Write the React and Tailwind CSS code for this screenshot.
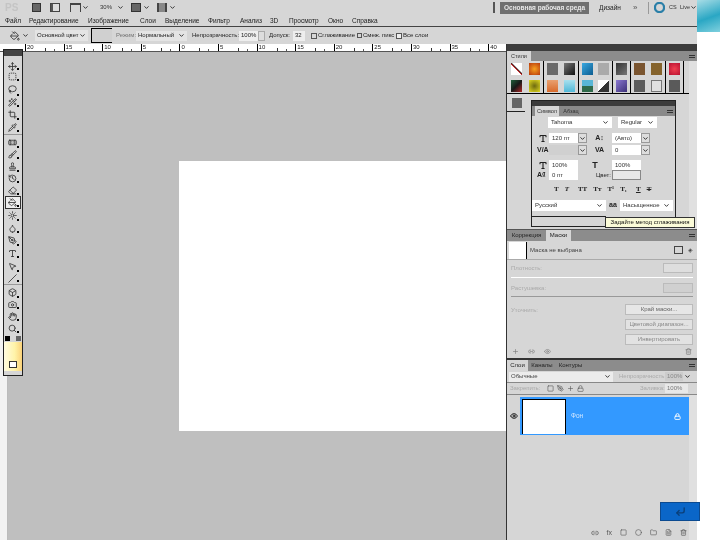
import React from 'react';
import {
  Move, SquareDashed, Lasso, Wand2, Crop, Pipette, Bandage, Brush, Stamp, History, Eraser, PaintBucket,
  Sun, Droplet, PenTool, Type, MousePointer2, Slash, Box, Camera, Hand, Search, ChevronDown, Square,
  Eye, Lock, Link2, Plus, Trash2, Folder, FileText, CornerDownLeft, Circle,
} from 'lucide-react';

const menus = [
  ['Файл', 'w-[24px]'], ['Редактирование', 'w-[59px]'], ['Изображение', 'w-[52px]'], ['Слои', 'w-[25px]'],
  ['Выделение', 'w-[43px]'], ['Фильтр', 'w-[32px]'], ['Анализ', 'w-[30px]'], ['3D', 'w-[19px]'],
  ['Просмотр', 'w-[39px]'], ['Окно', 'w-[24px]'], ['Справка', 'w-[32px]'],
];

const tools = [
  [Move, 'h-[9px]'], [SquareDashed, 'h-[11px]'], [Lasso, 'h-[15px]'], [Wand2, 'h-[11px]'], [Crop, 'h-[13px]'], [Pipette, 'h-[12px]'],
  null,
  [Bandage, 'h-[14px]'], [Brush, 'h-[11px]'], [Stamp, 'h-[13px]'], [History, 'h-[11px]'], [Eraser, 'h-[12px]'],
  [PaintBucket, 'h-[13px]', true], [Sun, 'h-[13px]'], [Droplet, 'h-[12px]'], [PenTool, 'h-[13px]'], [Type, 'h-[12px]'], [MousePointer2, 'h-[14px]'], [Slash, 'h-[10px]'],
  null,
  [Box, 'h-[14px]'], [Camera, 'h-[11px]'], [Hand, 'h-[12px]'], [Search, 'h-[12px]'],
];

const swatchGroups = [
  { w: 'w-[37px]', top: ['bg-[linear-gradient(45deg,#fff_44%,#c81e1e_48%,#222_54%,#fff_58%)]', 'bg-[radial-gradient(circle,#f6a020,#b8380c)]'], bottom: ['bg-[linear-gradient(135deg,#1f5f3a,#181818_50%,#b42828)]', 'bg-[radial-gradient(circle,#6e6a10,#e0d820)]'] },
  { w: 'w-[35px]', top: ['bg-[#6a6a6a]', 'bg-[linear-gradient(135deg,#777,#111)]'], bottom: ['bg-[linear-gradient(#e9a070,#d86a2c)]', 'bg-[linear-gradient(#a8e0ee,#50b8d8)]'] },
  { w: 'w-[34px]', top: ['bg-[linear-gradient(135deg,#3aa8e0,#0c5c90)]', 'bg-[#aaaaaa]'], bottom: ['bg-[linear-gradient(#59b6d6_50%,#2f6a4a_50%)]', 'bg-[linear-gradient(135deg,#fff_50%,#333_50%)]'] },
  { w: 'w-[18px]', top: ['bg-[linear-gradient(135deg,#333,#777)]'], bottom: ['bg-[linear-gradient(135deg,#8a78d0,#3c3078)]'] },
  { w: 'w-[35px]', top: ['bg-[#7a5530]', 'bg-[#85632c]'], bottom: ['bg-[#5c5c5c]', 'bg-[#e0e0e0] border border-[#777]'] },
  { w: 'w-[18px]', top: ['bg-[radial-gradient(circle,#f04050,#b81030)]'], bottom: ['bg-[#5a5a5a]'] },
];

function Arrow({ className = '' }) {
  return <ChevronDown size={7} strokeWidth={3} className={`shrink-0 text-[#222] ${className}`} />;
}

function Box2({ className = '', children }) {
  return <div className={`h-[10px] bg-white flex items-center px-[3px] text-[6px] text-[#333] ${className}`}>{children}</div>;
}

function Ruler() {
  const labels = ['20', '15', '10', '5', '0', '5', '10', '15', '20', '25', '30', '35', '40'];
  return (
    <div className="h-[8px] bg-white flex pl-[25px] overflow-hidden border-b border-[#555]">
      {labels.map((l, i) => (
        <div key={i} className="w-[38.6px] shrink-0 border-l border-black flex h-[8px]">
          <span className="text-[6px] leading-[6px] text-[#222] pl-[1px] w-[19px]">{l}</span>
          <span className="w-[1px] h-[3px] mt-[4px] bg-[#333]" />
          <span className="w-[9px] border-r border-[#555] h-[2px] mt-[5px]" />
        </div>
      ))}
    </div>
  );
}

function PanelMenu() {
  return <span className="ml-auto mr-[2px] self-center w-[6px] h-[3px] border-y border-[#333]" />;
}

function MaskField({ label, dim, className = '' }) {
  return (
    <div className={`h-[10px] flex items-center px-[4px] ${className}`}>
      <span className="text-[6px] text-[#aaa] flex-1">{label}</span>
      <div className={`w-[30px] h-[10px] border border-[#bbb] ${dim ? 'bg-[#d0d0d0]' : 'bg-[#dedede]'}`} />
    </div>
  );
}

function CharRow({ children, className = '' }) {
  return <div className={`flex items-center ${className}`}>{children}</div>;
}

export default function App() {
  return (
    <div className="w-[720px] h-[540px] flex bg-white relative overflow-hidden blur-[0.35px] font-['Liberation_Sans',sans-serif]">
      <div className="w-[697px] flex flex-col bg-[#d6d6d6]">

        {/* Верхняя панель приложения */}
        <div className="h-[15px] flex items-center text-[#333]">
          <span className="w-[32px] pl-[5px] text-[10px] font-bold text-[#c4c4c4]">PS</span>
          <div className="w-[18px]"><div className="w-[9px] h-[9px] bg-[#666] border border-[#333]" /></div>
          <div className="w-[20px]"><div className="w-[10px] h-[9px] border border-[#444] bg-[linear-gradient(90deg,#555_30%,#ddd_30%)]" /></div>
          <div className="w-[30px] flex items-center gap-[1px]"><div className="w-[11px] h-[9px] border-t-2 border-l border-r border-[#444]" /><Arrow /></div>
          <span className="w-[31px] text-[6px] flex items-center gap-[5px]">30%<Arrow /></span>
          <div className="w-[26px] flex items-center gap-[2px]"><div className="w-[10px] h-[9px] bg-[#666] border border-[#333]" /><Arrow /></div>
          <div className="w-[24px] flex items-center gap-[2px]"><div className="w-[10px] h-[9px] border-x-2 border-[#444] bg-[#888]" /><Arrow /></div>
          <div className="flex-1 flex justify-end pr-[5px]"><div className="w-[2px] h-[11px] bg-[#555]" /></div>
          <div className="w-[89px] h-[12px] bg-[#707070] text-[#e8e8e8] text-[6.5px] font-bold flex items-center justify-center">Основная рабочая среда</div>
          <span className="w-[44px] pl-[10px] text-[6.5px] text-[#222]">Дизайн</span>
          <span className="w-[15px] text-[8px] text-[#555]">»</span>
          <div className="w-[1px] h-[12px] bg-[#999] mr-[5px]" />
          <Circle size={11} strokeWidth={5} className="text-[#2a7fa8]" />
          <span className="text-[5.5px] pl-[4px] w-[15px]">CS</span>
          <span className="text-[5.5px] flex items-center w-[17px]">Live<Arrow /></span>
        </div>

        {/* Главное меню */}
        <div className="h-[12px] flex items-center pl-[5px] border-b border-[#444] text-[6.5px] text-[#222]">
          {menus.map(([m, w]) => <span key={m} className={w}>{m}</span>)}
        </div>

        {/* Параметры инструмента */}
        <div className="h-[17px] flex items-center text-[6px] text-[#222]">
          <div className="w-[35px] pl-[10px] flex items-center"><PaintBucket size={10} className="text-[#333]" /><Arrow className="ml-[2px]" /></div>
          <div className="w-[53px] h-[11px] bg-[#e4e4e4] flex items-center justify-between px-[2px]">Основной цвет<Arrow /></div>
          <div className="w-[21px] h-[15px] ml-[3px] border-l border-t border-b border-black bg-[#d0d0d0]" />
          <span className="w-[24px] pl-[4px] text-[#777]">Режим:</span>
          <div className="w-[51px] h-[10px] bg-[#e4e4e4] flex items-center justify-between px-[2px]">Нормальный<Arrow /></div>
          <span className="w-[52px] pl-[5px] whitespace-nowrap">Непрозрачность:</span>
          <div className="w-[19px] h-[10px] bg-[#eee] px-[2px] flex items-center">100%</div>
          <div className="w-[7px] h-[10px] border border-[#aaa] bg-[#ddd]" />
          <span className="w-[28px] pl-[4px]">Допуск:</span>
          <div className="w-[12px] h-[10px] bg-[#eee] px-[2px] flex items-center">32</div>
          <div className="w-[6px] ml-[6px] h-[6px] border border-[#555]" />
          <span className="w-[40px] pl-[1px]">Сглаживание</span>
          <div className="w-[5px] h-[5px] border border-[#555]" />
          <span className="w-[34px] pl-[1px]">Смеж. пикс</span>
          <div className="w-[6px] h-[6px] border border-[#555] bg-[#eee]" />
          <span className="pl-[1px]">Все слои</span>
        </div>

        {/* Рабочая область */}
        <div className="flex-1 flex min-h-0">
          <div className="w-[506px] flex flex-col">
            <Ruler />
            <div className="flex-1 flex min-h-0">
              <div className="w-[8px] bg-[#f2f2f2] border-r border-[#bbb]" />
              <div className="flex-1 bg-[#bfbfbf] pt-[109px] pl-[171px]">
                <div className="w-[327px] h-[270px] bg-white" />
              </div>
            </div>
          </div>

          {/* Док панелей */}
          <div className="w-[191px] flex flex-col border-l border-[#333]">
            <div className="h-[7px] bg-[#3c3c3c]" />

            <div className="h-[10px] bg-[#8c8c8c] flex">
              <span className="w-[24px] bg-[#d6d6d6] text-[5.5px] text-[#333] flex items-center justify-center">Стили</span>
              <PanelMenu />
            </div>
            <div className="flex-none h-[49px] flex">
              <div className="flex-1 flex flex-col">
                <div className="h-[33px] flex border-b border-black">
                  {swatchGroups.map((g, i) => (
                    <div key={i} className={`${g.w} border-r border-black flex flex-col gap-[5px] pt-[2px]`}>
                      <div className="flex justify-around">{g.top.map((c, j) => <div key={j} className={`w-[11px] h-[12px] ${c}`} />)}</div>
                      <div className="flex justify-around">{g.bottom.map((c, j) => <div key={j} className={`w-[11px] h-[12px] ${c}`} />)}</div>
                    </div>
                  ))}
                </div>
                <div className="pl-[5px] pt-[4px]"><div className="w-[10px] h-[10px] bg-[#666]" /></div>
              </div>
              <div className="w-[8px] bg-[#e0e0e0]" />
            </div>

            <div className="flex-none h-[119px] bg-[#d6d6d6] flex">
              <div className="flex-1"><div className="w-[18px] h-[1px] bg-[#222] mt-[1px]" /></div>
              <div className="w-[8px] bg-[#e0e0e0]" />
            </div>

            {/* Маски */}
            <div className="h-[12px] bg-[#8c8c8c] flex text-[6px] text-[#222] border-t border-[#555]">
              <span className="w-[39px] flex items-center justify-center">Коррекция</span>
              <span className="w-[25px] bg-[#d6d6d6] flex items-center justify-center">Маски</span>
              <PanelMenu />
            </div>
            <div className="h-[119px] flex flex-col border-b-2 border-[#333]">
              <div className="h-[19px] flex items-center border-b border-[#aaa] pl-[2px] pr-[4px]">
                <div className="w-[18px] h-[17px] bg-white border-r border-black" />
                <span className="text-[6px] text-[#444] pl-[3px] flex-1">Маска не выбрана</span>
                <div className="w-[9px] h-[8px] border border-[#444] mr-[5px]" />
                <span className="text-[6px] text-[#444]">◈</span>
              </div>
              <MaskField label="Плотность:" className="mt-[3px]" />
              <div className="h-[1px] mx-[4px] bg-white mt-[4px]" />
              <MaskField label="Растушевка:" dim className="mt-[5px]" />
              <div className="h-[1px] mx-[4px] bg-[#999] mt-[3px]" />
              <div className="flex px-[4px] mt-[7px]">
                <span className="text-[6px] text-[#aaa] flex-1 pt-[2px]">Уточнить:</span>
                <div className="w-[68px] flex flex-col gap-[4px] text-[6px] text-[#888]">
                  <div className="h-[11px] bg-[#e6e6e6] border border-[#bbb] flex items-center justify-center text-[#666]">Край маски...</div>
                  <div className="h-[11px] bg-[#e2e2e2] border border-[#bbb] flex items-center justify-center">Цветовой диапазон...</div>
                  <div className="h-[11px] bg-[#e2e2e2] border border-[#bbb] flex items-center justify-center">Инвертировать</div>
                </div>
              </div>
              <div className="mt-auto h-[12px] mb-[1px] flex items-center px-[5px] gap-[9px] text-[#777]">
                <Plus size={7} /><Link2 size={7} /><Eye size={7} /><Trash2 size={7} className="ml-auto" />
              </div>
            </div>

            {/* Слои */}
            <div className="h-[11px] bg-[#8c8c8c] flex text-[6px] text-[#222]">
              <span className="w-[21px] bg-[#d6d6d6] flex items-center justify-center">Слои</span>
              <span className="w-[28px] flex items-center justify-center">Каналы</span>
              <span className="w-[29px] flex items-center justify-center">Контуры</span>
              <PanelMenu />
            </div>
            <div className="flex-1 flex flex-col min-h-0">
              <div className="h-[12px] flex items-center pl-[2px] text-[6px] border-b border-[#888]">
                <div className="w-[104px] h-[10px] bg-[#ececec] flex items-center justify-between px-[2px] text-[#444]">Обычные<Arrow /></div>
                <span className="w-[52px] pl-[6px] text-[#aaa] whitespace-nowrap">Непрозрачность:</span>
                <div className="w-[18px] h-[9px] bg-[#ccc] text-[#888] flex items-center px-[2px]">100%</div>
                <Arrow className="ml-[1px]" />
              </div>
              <div className="h-[12px] flex items-center pl-[3px] text-[6px] border-b border-[#888]">
                <span className="w-[37px] text-[#aaa]">Закрепить:</span>
                <div className="w-[93px] flex gap-[3px] text-[#555]"><Square size={7} /><PenTool size={7} /><Plus size={7} /><Lock size={7} /></div>
                <span className="w-[25px] text-[#aaa]">Заливка:</span>
                <div className="w-[23px] h-[9px] bg-[#e8e8e8] text-[#777] flex items-center px-[2px]">100%</div>
              </div>
              <div className="flex-1 flex min-h-0">
                <div className="flex-1 flex flex-col">
                  <div className="flex h-[38px] mt-[2px]">
                    <div className="w-[13px] flex items-center justify-center"><Eye size={8} strokeWidth={3} className="text-[#222]" /></div>
                    <div className="flex-1 bg-[#3399ff] flex items-center pl-[2px] pr-[8px]">
                      <div className="w-[44px] h-[35px] bg-white border-x border-black border-t" />
                      <span className="pl-[5px] text-[6.5px] text-[#cfe6ff] flex-1">Фон</span>
                      <Lock size={7} strokeWidth={3} className="text-white" />
                    </div>
                  </div>
                  <div className="mt-auto h-[13px] mb-[1px] flex items-center justify-end gap-[8px] pr-[2px] text-[#555]">
                    <Link2 size={8} /><span className="text-[7px] leading-none">fx</span><Square size={7} /><Circle size={7} /><Folder size={7} /><FileText size={7} /><Trash2 size={7} />
                  </div>
                </div>
                <div className="w-[8px] bg-[#e0e0e0]" />
              </div>
            </div>
          </div>
        </div>
      </div>

      {/* Декор справа от окна */}
      <div className="flex-1">
        <div className="h-[32px] bg-[linear-gradient(160deg,#a8dde6,#2aa7c4_55%,#7fd0de)]" />
      </div>

      {/* Плавающая панель инструментов */}
      <div className="absolute left-[3px] top-[49px] w-[20px] h-[327px] bg-[#d6d6d6] border border-[#222] flex flex-col items-center">
        <div className="w-full h-[6px] bg-[#444] shrink-0" />
        <div className="h-[6px] shrink-0" />
        {tools.map((t, i) => {
          if (!t) return <div key={i} className="w-full h-[1px] bg-[#999] my-[0.5px] shrink-0" />;
          const [Icon, h, selected] = t;
          return (
            <div key={i} className={`w-[16px] ${h} shrink-0 flex items-center justify-center ${selected ? 'bg-[#eee] border border-[#333]' : ''}`}>
              <Icon size={9} strokeWidth={2.2} className="text-[#333]" />
              <span className="w-[2px] h-[2px] bg-black self-end mb-[1px]" />
            </div>
          );
        })}
        <div className="w-[16px] h-[8px] flex justify-between items-center shrink-0">
          <div className="w-[5px] h-[5px] bg-black" />
          <div className="w-[5px] h-[5px] bg-[#666]" />
        </div>
        <div className="w-[18px] h-[29px] shrink-0 bg-[linear-gradient(90deg,#fffbe0,#fff3a8_60%,#fbd27a)] flex items-end justify-center pb-[3px]">
          <div className="w-[8px] h-[7px] bg-white border border-[#333]" />
        </div>
      </div>

      {/* Плавающая панель "Символ" */}
      <div className="absolute left-[531px] top-[100px] w-[145px] h-[127px] bg-[#d6d6d6] border border-[#222] flex flex-col">
        <div className="h-[5px] bg-[#3c3c3c] shrink-0" />
        <div className="h-[10px] bg-[#8a8a8a] flex pl-[3px] text-[5.5px] text-[#333] shrink-0">
          <span className="w-[24px] bg-[#d6d6d6] flex items-center justify-center">Символ</span>
          <span className="w-[24px] flex items-center justify-center">Абзац</span>
          <PanelMenu />
        </div>
        <div className="pt-[1px] flex flex-col text-[#222]">
          <CharRow className="h-[11px] pl-[16px] gap-[6px]">
            <Box2 className="w-[64px] justify-between !h-[11px]">Tahoma<Arrow /></Box2>
            <Box2 className="w-[39px] justify-between !h-[11px]">Regular<Arrow /></Box2>
          </CharRow>
          <CharRow className="h-[10px] mt-[5px] pl-[5px]">
            <Type size={9} strokeWidth={3} className="w-[12px]" />
            <Box2 className="w-[29px]">120 пт</Box2>
            <div className="w-[9px] h-[10px] bg-[#ddd] border border-[#999] flex items-center"><Arrow /></div>
            <span className="w-[25px] text-[7px] text-center font-bold">A↕</span>
            <Box2 className="w-[29px]">(Авто)</Box2>
            <div className="w-[9px] h-[10px] bg-[#ddd] border border-[#999] flex items-center"><Arrow /></div>
          </CharRow>
          <CharRow className="h-[10px] mt-[2px] pl-[5px]">
            <span className="w-[12px] text-[7px] font-bold">V/A</span>
            <div className="w-[29px] h-[10px] bg-[#d0d0d0]" />
            <div className="w-[9px] h-[10px] bg-[#ddd] border border-[#999] flex items-center"><Arrow /></div>
            <span className="w-[25px] text-[7px] text-center font-bold">VA</span>
            <Box2 className="w-[29px]">0</Box2>
            <div className="w-[9px] h-[10px] bg-[#ddd] border border-[#999] flex items-center"><Arrow /></div>
          </CharRow>
          <CharRow className="h-[10px] mt-[5px] pl-[5px]">
            <Type size={9} strokeWidth={3} className="w-[12px]" />
            <Box2 className="w-[29px]">100%</Box2>
            <div className="w-[34px] flex justify-center"><span className="text-[9px] font-bold leading-none">T</span></div>
            <Box2 className="w-[29px]">100%</Box2>
          </CharRow>
          <CharRow className="h-[10px] pl-[5px]">
            <span className="w-[12px] text-[7px] font-bold">A₫</span>
            <Box2 className="w-[29px]">0 пт</Box2>
            <span className="w-[34px] text-[6px] text-right pr-[1px]">Цвет:</span>
            <div className="w-[29px] h-[10px] bg-[#e8e8e8] border border-[#888]" />
          </CharRow>
          <CharRow className="h-[10px] mt-[4px] pl-[22px] gap-[6px] text-[7px] font-bold font-['Liberation_Serif',serif]">
            <span>T</span><span className="italic">T</span><span className="ml-[3px]">TT</span><span>Tт</span><span>T¹</span><span>T₁</span><span className="ml-[3px] underline">T</span><span className="line-through">T</span>
          </CharRow>
          <CharRow className="h-[11px] mt-[6px]">
            <Box2 className="w-[74px] justify-between !h-[11px]">Русский<Arrow /></Box2>
            <span className="w-[14px] text-[7px] text-center font-bold">aa</span>
            <Box2 className="w-[53px] justify-between !h-[11px]">Насыщенное<Arrow /></Box2>
          </CharRow>
          <div className="h-[1px] w-[74px] bg-[#222] mt-[5px]" />
        </div>
      </div>

      {/* Подсказка */}
      <div className="absolute left-[605px] top-[217px] w-[90px] h-[11px] bg-[#fbfbd8] border border-[#333] text-[6px] text-[#111] flex items-center justify-center whitespace-nowrap">
        Задайте метод сглаживания
      </div>

      {/* Синяя кнопка поверх */}
      <div className="absolute left-[660px] top-[502px] w-[40px] h-[19px] bg-[#0a66c8] border border-[#0b4a90] flex items-center justify-center">
        <CornerDownLeft size={11} strokeWidth={3} className="text-[#0b3f78]" />
      </div>
    </div>
  );
}
